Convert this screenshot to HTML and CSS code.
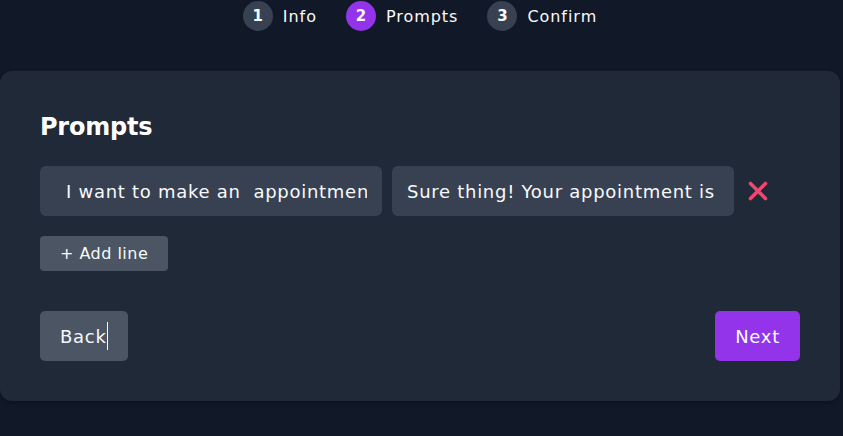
FILE: index.html
```html
<!DOCTYPE html>
<html lang="en">
<head>
<meta charset="utf-8">
<title>Prompts</title>
<link rel="stylesheet" href="styles.css">
</head>
<body>
<div class="page">
  <nav class="steps">
    <div class="step"><span class="step-num">1</span><span class="step-label">Info</span></div>
    <div class="step"><span class="step-num active">2</span><span class="step-label">Prompts</span></div>
    <div class="step"><span class="step-num">3</span><span class="step-label">Confirm</span></div>
  </nav>
  <section class="card">
    <h2 class="title">Prompts</h2>
    <div class="row">
      <input class="field field-first" type="text" value="I want to make an  appointment">
      <input class="field" type="text" value="Sure thing! Your appointment is booked">
      <button class="remove" type="button" aria-label="Remove line">
        <svg width="22" height="22" viewBox="0 0 22 22"><path d="M3.5 3.5 L18.5 18.5 M18.5 3.5 L3.5 18.5" stroke="#f2466f" stroke-width="3.6" stroke-linecap="round" fill="none"/></svg>
      </button>
    </div>
    <button class="add" type="button">+ Add line</button>
    <div class="actions">
      <button class="btn btn-back" type="button">Back<span class="caret"></span></button>
      <button class="btn btn-next" type="button">Next</button>
    </div>
  </section>
</div>
</body>
</html>
```
FILE: styles.css
```css
* { box-sizing: border-box; }
body {
  margin: 0;
  background: #111827;
  font-family: "DejaVu Sans", "Open Sans", sans-serif;
  letter-spacing: 0.04em;
  color: #f9fafb;
  height: 436px;
  overflow: hidden;
}
.page { width: 840px; }
.steps {
  display: flex;
  justify-content: center;
  gap: 29px;
  padding-top: 1px;
  margin-bottom: 40px;
}
.step {
  display: flex;
  align-items: center;
  gap: 10px;
  font-size: 16px;
  letter-spacing: 0.06em;
  color: #f9fafb;
}
.step-num {
  width: 30px;
  height: 30px;
  border-radius: 50%;
  background: #374151;
  display: flex;
  align-items: center;
  justify-content: center;
  font-weight: 700;
  font-size: 15px;
  letter-spacing: 0;
}
.step-num.active { background: #9333ea; }
.card {
  background: #1f2937;
  border-radius: 12px;
  padding: 40px;
  box-shadow: 0 2px 4px rgba(0,0,0,0.25);
}
.title {
  margin: 0 0 23px;
  font-size: 24px;
  line-height: 32px;
  font-weight: 700;
  letter-spacing: -0.01em;
  color: #ffffff;
}
.row {
  display: flex;
  align-items: center;
  gap: 10px;
}
.field {
  width: 342px;
  height: 50px;
  background: #374151;
  border: none;
  border-radius: 6px;
  padding: 0 15px;
  color: #f9fafb;
  font-family: inherit;
  font-size: 18px;
  letter-spacing: 0.04em;
  outline: none;
}
.field-first { padding-left: 26px; }
.remove {
  background: none;
  border: none;
  padding: 0;
  margin-left: 3px;
  width: 22px;
  height: 22px;
  display: flex;
  cursor: pointer;
}
.add {
  margin-top: 20px;
  height: 35px;
  padding: 0 20px;
  background: #4b5563;
  border: none;
  border-radius: 4px;
  color: #f9fafb;
  font-family: inherit;
  font-size: 16px;
  letter-spacing: 0.03em;
}
.actions {
  display: flex;
  justify-content: space-between;
  margin-top: 40px;
}
.btn {
  height: 50px;
  padding: 0 20px;
  border: none;
  border-radius: 5px;
  color: #f9fafb;
  font-family: inherit;
  font-size: 18px;
  letter-spacing: 0.04em;
  display: flex;
  align-items: center;
}
.btn-back { background: #4b5563; }
.btn-next { background: #9333ea; }
.caret {
  display: inline-block;
  width: 1px;
  height: 28px;
  background: #f9fafb;
}
```
